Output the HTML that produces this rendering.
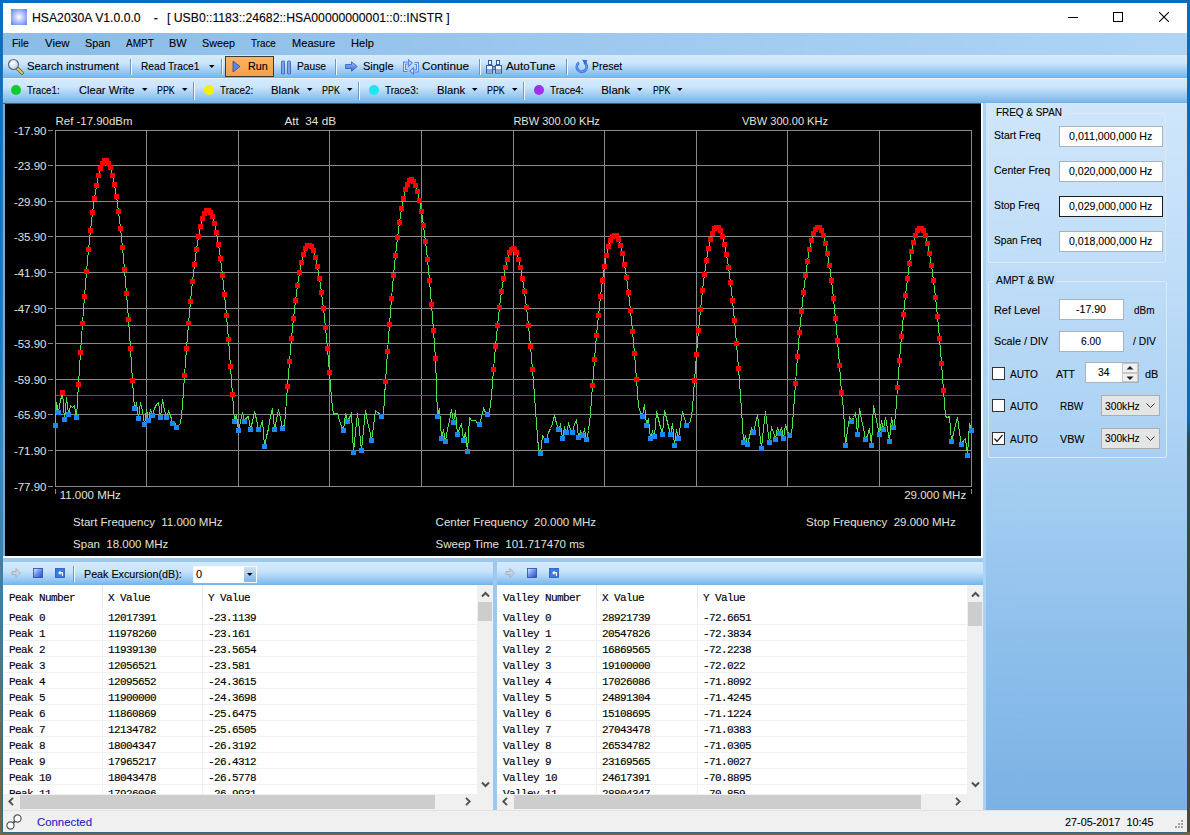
<!DOCTYPE html>
<html><head><meta charset="utf-8"><title>HSA2030A</title>
<style>
html,body{margin:0;padding:0;width:1190px;height:835px;overflow:hidden;background:#6a5a3c;}
body{position:relative;font-family:"Liberation Sans", sans-serif;}
.t{position:absolute;white-space:pre;transform-origin:0 0;-webkit-text-stroke:0.1px currentColor;}
.r{position:absolute;}
</style></head><body>
<div class="r" style="left:0px;top:0px;width:1190px;height:835px;background:#7a6438;"></div>
<div class="r" style="left:0px;top:0px;width:1190px;height:3px;background:#0a6cbc;"></div>
<div class="r" style="left:0px;top:0px;width:3px;height:832px;background:linear-gradient(#0b6dbd 0%,#1d78bc 40%,#3a86bc 55%,#4a7a90 75%,#6a6a50 88%,#7a6438 100%);"></div>
<div class="r" style="left:2px;top:33px;width:1px;height:799px;background:linear-gradient(#1a74bc 0%,#3a8ac4 50%,#3a7a9a 80%,#2a6a7a 100%);"></div>
<div class="r" style="left:1187px;top:0px;width:3px;height:832px;background:linear-gradient(#0a6cbc 0%,#0b6cb8 50%,#2a4a50 53%,#4a4a38 100%);"></div>
<div class="r" style="left:2px;top:832px;width:1186px;height:1px;background:#3a6a78;"></div>
<div class="r" style="left:3px;top:3px;width:1184px;height:829px;background:#fff;"></div>
<div class="r" style="left:11px;top:9px;width:16px;height:16px;background:radial-gradient(circle at 50% 50%,#ffffff 0%,#b8c8f8 40%,#5a80e8 100%);"></div>
<div class="t" style="left:32.20px;top:11px;font-size:12.3px;line-height:15px;color:#000;transform:scaleX(0.9934);">HSA2030A V1.0.0.0</div>
<div class="t" style="left:153.80px;top:11px;font-size:12.3px;line-height:15px;color:#000;">-</div>
<div class="t" style="left:166.80px;top:11px;font-size:12.3px;line-height:15px;color:#000;transform:scaleX(0.9926);">[ USB0::1183::24682::HSA00000000001::0::INSTR ]</div>
<div class="r" style="left:1068px;top:17px;width:10px;height:1px;background:#000;"></div>
<div class="r" style="left:1113px;top:12px;width:10px;height:10px;border:1px solid #000;box-sizing:border-box;"></div>
<svg class="r" style="left:1159px;top:12px" width="10" height="10"><path d="M0 0L10 10M10 0L0 10" stroke="#000" stroke-width="1.1"/></svg>
<div class="r" style="left:3px;top:33px;width:1184px;height:22px;background:linear-gradient(90deg,#8abce6 0%,#9cc7ee 45%,#afd4f4 100%);"></div>
<div class="t" style="left:12.40px;top:36px;font-size:11.5px;line-height:14px;color:#000;transform:scaleX(0.9066);">File</div>
<div class="t" style="left:45.40px;top:36px;font-size:11.5px;line-height:14px;color:#000;transform:scaleX(0.9911);">View</div>
<div class="t" style="left:85.00px;top:36px;font-size:11.5px;line-height:14px;color:#000;transform:scaleX(0.9420);">Span</div>
<div class="t" style="left:126.00px;top:36px;font-size:11.5px;line-height:14px;color:#000;transform:scaleX(0.8765);">AMPT</div>
<div class="t" style="left:169.00px;top:36px;font-size:11.5px;line-height:14px;color:#000;transform:scaleX(0.9501);">BW</div>
<div class="t" style="left:202.40px;top:36px;font-size:11.5px;line-height:14px;color:#000;transform:scaleX(0.9356);">Sweep</div>
<div class="t" style="left:250.80px;top:36px;font-size:11.5px;line-height:14px;color:#000;transform:scaleX(0.8561);">Trace</div>
<div class="t" style="left:292.40px;top:36px;font-size:11.5px;line-height:14px;color:#000;transform:scaleX(0.9633);">Measure</div>
<div class="t" style="left:351.30px;top:36px;font-size:11.5px;line-height:14px;color:#000;transform:scaleX(0.9640);">Help</div>
<div class="r" style="left:3px;top:55px;width:1184px;height:23px;background:linear-gradient(#d6ebfc 0%,#cce5fb 35%,#a9d2f6 60%,#7cb8ea 95%,#6aaee6 100%);"></div>
<div class="r" style="left:3px;top:78px;width:1184px;height:25px;background:linear-gradient(#d6ebfc 0%,#cce5fb 35%,#a9d2f6 60%,#7cb8ea 95%,#6aaee6 100%);"></div>
<div class="r" style="left:3px;top:78px;width:1184px;height:1px;background:#e6f3fd;"></div>
<div class="r" style="left:3px;top:103px;width:1184px;height:1px;background:#4a5a6a;"></div>
<svg class="r" style="left:7px;top:58px" width="17" height="17"><defs><radialGradient id="gl" cx="0.4" cy="0.35" r="0.7"><stop offset="0" stop-color="#ffffff"/><stop offset="1" stop-color="#b8d0e8"/></radialGradient></defs><path d="M10.5 10.5L15 15" stroke="#6a5a20" stroke-width="3.6" stroke-linecap="round"/><path d="M10.5 10.5L15 15" stroke="#e8cc60" stroke-width="2" stroke-linecap="round"/><circle cx="6.5" cy="6.5" r="5" fill="url(#gl)" stroke="#5a6a7a" stroke-width="1.2"/></svg>
<div class="t" style="left:27.40px;top:59px;font-size:11.5px;line-height:14px;color:#000;transform:scaleX(0.9837);">Search instrument</div>
<div class="r" style="left:130px;top:59px;width:2px;height:16px;background:linear-gradient(90deg,#7096bc 0,#7096bc 1px,#f4faff 1px,#f4faff 2px);"></div>
<div class="t" style="left:141.40px;top:59px;font-size:11.5px;line-height:14px;color:#000;transform:scaleX(0.8854);">Read Trace1</div>
<svg class="r" style="left:209px;top:65px" width="6" height="4"><path d="M0 0H5.5L2.75 3z" fill="#000"/></svg>
<div class="r" style="left:221px;top:59px;width:2px;height:16px;background:linear-gradient(90deg,#7096bc 0,#7096bc 1px,#f4faff 1px,#f4faff 2px);"></div>
<div class="r" style="left:225px;top:56px;width:49px;height:21px;background:linear-gradient(#fbb662,#f79f4a);border:1px solid #3e3a36;box-sizing:border-box;"></div>
<svg class="r" style="left:232px;top:60px" width="9" height="13"><path d="M1 1L8 6.5L1 12z" fill="#5a88e0" stroke="#2a4aa0" stroke-width="0.8"/></svg>
<div class="t" style="left:247.90px;top:59px;font-size:11.5px;line-height:14px;color:#000;transform:scaleX(0.9385);">Run</div>
<svg class="r" style="left:280px;top:60px" width="12" height="15"><defs><linearGradient id="pg" x1="0" y1="0" x2="1" y2="0"><stop offset="0" stop-color="#4a72d0"/><stop offset="0.5" stop-color="#9cbcf4"/><stop offset="1" stop-color="#3a62c0"/></linearGradient></defs><rect x="1.5" y="1" width="3" height="13" rx="0.8" fill="url(#pg)" stroke="#3a5ab8" stroke-width="0.7"/><rect x="7.5" y="1" width="3" height="13" rx="0.8" fill="url(#pg)" stroke="#3a5ab8" stroke-width="0.7"/></svg>
<div class="t" style="left:296.50px;top:59px;font-size:11.5px;line-height:14px;color:#000;transform:scaleX(0.8893);">Pause</div>
<div class="r" style="left:335px;top:59px;width:2px;height:16px;background:linear-gradient(90deg,#7096bc 0,#7096bc 1px,#f4faff 1px,#f4faff 2px);"></div>
<svg class="r" style="left:345px;top:61px" width="13" height="11"><defs><linearGradient id="ag" x1="0" y1="0" x2="0" y2="1"><stop offset="0" stop-color="#9cc0f8"/><stop offset="1" stop-color="#3a68d8"/></linearGradient></defs><path d="M0.5 3.5H6.5V0.8L12.2 5.5L6.5 10.2V7.5H0.5z" fill="url(#ag)" stroke="#3058c0" stroke-width="0.8"/></svg>
<div class="t" style="left:362.50px;top:59px;font-size:11.5px;line-height:14px;color:#000;transform:scaleX(0.9540);">Single</div>
<svg class="r" style="left:402px;top:59px" width="18" height="16"><g fill="none" stroke="#5a86e0" stroke-width="3" stroke-linejoin="miter"><path d="M6.5 4H2.5V11.5H5.5"/><path d="M11.5 12H15.5V4.5H12.5"/></g><g fill="none" stroke="#d8e6fa" stroke-width="1"><path d="M6.5 4H2.5V11.5H5.5"/><path d="M11.5 12H15.5V4.5H12.5"/></g><path d="M6.5 0.8L10.2 4L6.5 7.2z" fill="#d8e6fa" stroke="#5a86e0" stroke-width="1.1"/><path d="M11.5 8.8L7.8 12L11.5 15.2z" fill="#d8e6fa" stroke="#5a86e0" stroke-width="1.1"/></svg>
<div class="t" style="left:422.40px;top:59px;font-size:11.5px;line-height:14px;color:#000;transform:scaleX(1.0210);">Continue</div>
<div class="r" style="left:479px;top:59px;width:2px;height:16px;background:linear-gradient(90deg,#7096bc 0,#7096bc 1px,#f4faff 1px,#f4faff 2px);"></div>
<svg class="r" style="left:486px;top:59px" width="17" height="15"><g stroke="#3a5a98" stroke-width="1" fill="#eef4fc"><rect x="2.5" y="1.5" width="3" height="4"/><rect x="10.5" y="1.5" width="3" height="4"/><rect x="0.5" y="6.5" width="6" height="7.5"/><rect x="9.5" y="6.5" width="6" height="7.5"/><rect x="6.5" y="7.5" width="3" height="3" fill="#8aa8d8"/></g><g fill="#8aa8d8"><rect x="1" y="10" width="5" height="3.5"/><rect x="10" y="10" width="5" height="3.5"/></g></svg>
<div class="t" style="left:505.90px;top:59px;font-size:11.5px;line-height:14px;color:#000;">AutoTune</div>
<div class="r" style="left:566px;top:59px;width:2px;height:16px;background:linear-gradient(90deg,#7096bc 0,#7096bc 1px,#f4faff 1px,#f4faff 2px);"></div>
<svg class="r" style="left:574px;top:59px" width="15" height="15"><path d="M5 3.6A5 5 0 1 0 10.2 3.4" fill="none" stroke="#3a6ad0" stroke-width="2.6"/><path d="M5 3.6A5 5 0 1 0 10.2 3.4" fill="none" stroke="#6a9af0" stroke-width="1.2"/><path d="M8.2 0.8L13.5 1.2L11 6.2z" fill="#3a6ad0"/></svg>
<div class="t" style="left:592.20px;top:59px;font-size:11.5px;line-height:14px;color:#000;transform:scaleX(0.9086);">Preset</div>
<div class="r" style="left:11px;top:85px;width:10px;height:10px;border-radius:50%;background:#13c933;"></div>
<div class="t" style="left:27.40px;top:83px;font-size:11.5px;line-height:14px;color:#000;transform:scaleX(0.8454);">Trace1:</div>
<div class="t" style="left:78.60px;top:83px;font-size:11.5px;line-height:14px;color:#000;transform:scaleX(0.9668);">Clear Write</div>
<svg class="r" style="left:142px;top:88px" width="6" height="4"><path d="M0 0H5.5L2.75 3z" fill="#000"/></svg>
<div class="t" style="left:157.00px;top:83px;font-size:11.5px;line-height:14px;color:#000;transform:scaleX(0.7691);">PPK</div>
<svg class="r" style="left:182px;top:88px" width="6" height="4"><path d="M0 0H5.5L2.75 3z" fill="#000"/></svg>
<div class="r" style="left:193px;top:82px;width:2px;height:18px;background:linear-gradient(90deg,#7096bc 0,#7096bc 1px,#f4faff 1px,#f4faff 2px);"></div>
<div class="r" style="left:204px;top:85px;width:10px;height:10px;border-radius:50%;background:#f2f200;"></div>
<div class="t" style="left:220.20px;top:83px;font-size:11.5px;line-height:14px;color:#000;transform:scaleX(0.8610);">Trace2:</div>
<div class="t" style="left:271.40px;top:83px;font-size:11.5px;line-height:14px;color:#000;transform:scaleX(0.9837);">Blank</div>
<svg class="r" style="left:307px;top:88px" width="6" height="4"><path d="M0 0H5.5L2.75 3z" fill="#000"/></svg>
<div class="t" style="left:322.40px;top:83px;font-size:11.5px;line-height:14px;color:#000;transform:scaleX(0.7778);">PPK</div>
<svg class="r" style="left:347px;top:88px" width="6" height="4"><path d="M0 0H5.5L2.75 3z" fill="#000"/></svg>
<div class="r" style="left:358px;top:82px;width:2px;height:18px;background:linear-gradient(90deg,#7096bc 0,#7096bc 1px,#f4faff 1px,#f4faff 2px);"></div>
<div class="r" style="left:369px;top:85px;width:10px;height:10px;border-radius:50%;background:#1de6f0;"></div>
<div class="t" style="left:385.30px;top:83px;font-size:11.5px;line-height:14px;color:#000;transform:scaleX(0.8688);">Trace3:</div>
<div class="t" style="left:436.50px;top:83px;font-size:11.5px;line-height:14px;color:#000;transform:scaleX(0.9803);">Blank</div>
<svg class="r" style="left:472px;top:88px" width="6" height="4"><path d="M0 0H5.5L2.75 3z" fill="#000"/></svg>
<div class="t" style="left:487.00px;top:83px;font-size:11.5px;line-height:14px;color:#000;transform:scaleX(0.7691);">PPK</div>
<svg class="r" style="left:512px;top:88px" width="6" height="4"><path d="M0 0H5.5L2.75 3z" fill="#000"/></svg>
<div class="r" style="left:523px;top:82px;width:2px;height:18px;background:linear-gradient(90deg,#7096bc 0,#7096bc 1px,#f4faff 1px,#f4faff 2px);"></div>
<div class="r" style="left:534px;top:85px;width:10px;height:10px;border-radius:50%;background:#a030e8;"></div>
<div class="t" style="left:549.90px;top:83px;font-size:11.5px;line-height:14px;color:#000;transform:scaleX(0.8713);">Trace4:</div>
<div class="t" style="left:601.20px;top:83px;font-size:11.5px;line-height:14px;color:#000;">Blank</div>
<svg class="r" style="left:637px;top:88px" width="6" height="4"><path d="M0 0H5.5L2.75 3z" fill="#000"/></svg>
<div class="t" style="left:652.50px;top:83px;font-size:11.5px;line-height:14px;color:#000;transform:scaleX(0.7561);">PPK</div>
<svg class="r" style="left:677px;top:88px" width="6" height="4"><path d="M0 0H5.5L2.75 3z" fill="#000"/></svg>
<div class="r" style="left:3px;top:104px;width:2px;height:452px;background:#7fa8c8;"></div>
<div class="r" style="left:5px;top:104px;width:976px;height:452px;background:#000;"></div>
<svg class="r" style="left:5px;top:104px" width="976" height="452" shape-rendering="crispEdges">
<g transform="translate(-5,-104)">
<path d="M55 130.5H972 M48 130.5H53 M55 165.5H972 M48 165.5H53 M55 201.5H972 M48 201.5H53 M55 236.5H972 M48 236.5H53 M55 272.5H972 M48 272.5H53 M55 308.5H972 M48 308.5H53 M55 343.5H972 M48 343.5H53 M55 379.5H972 M48 379.5H53 M55 414.5H972 M48 414.5H53 M55 450.5H972 M48 450.5H53 M55 486.5H972 M48 486.5H53 M55.5 130V487 M146.5 130V487 M238.5 130V487 M329.5 130V487 M421.5 130V487 M513.5 130V487 M604.5 130V487 M696.5 130V487 M787.5 130V487 M879.5 130V487 M971.5 130V487 M55.5 489V494M971.5 489V494" stroke="#8a8a8a" stroke-width="1" fill="none"/>
<path d="M56 325.5H971" stroke="#4a78b8" stroke-width="1"/>
<path d="M56 395.5H971" stroke="#a83030" stroke-width="1"/>
</g></svg>
<svg class="r" style="left:5px;top:104px" width="976" height="452">
<g transform="translate(-5,-104)">
<polyline points="55.5,425.5 56.5,402.5 58.5,412.5 60.5,400.5 62.5,392.5 64.5,419.5 66.5,397.5 68.5,414.5 70.5,405.5 72.5,407.5 74.5,405.5 76.5,417.5 78.5,384.5 80.5,352.5 82.5,323.5 84.5,296.5 86.5,271.5 88.5,249.5 90.5,230.5 92.5,212.5 94.5,198.5 96.5,185.5 98.5,175.5 100.5,168.5 102.5,163.5 104.5,160.5 106.5,160.5 108.5,163.5 110.5,167.5 112.5,175.5 114.5,184.5 116.5,196.5 118.5,211.5 120.5,228.5 122.5,247.5 124.5,269.5 126.5,293.5 128.5,319.5 130.5,348.5 132.5,380.5 134.5,408.5 136.5,403.5 138.5,418.5 140.5,402.5 142.5,410.5 144.5,424.5 146.5,409.5 148.5,420.5 150.5,409.5 152.5,415.5 154.5,408.5 156.5,404.5 158.5,402.5 160.5,417.5 162.5,399.5 164.5,410.5 166.5,417.5 168.5,411.5 170.5,415.5 172.5,423.5 174.5,421.5 176.5,427.5 178.5,425.5 180.5,423.5 182.5,405.5 184.5,375.5 186.5,348.5 188.5,323.5 190.5,301.5 192.5,281.5 194.5,264.5 196.5,249.5 198.5,236.5 200.5,226.5 202.5,218.5 204.5,213.5 206.5,210.5 208.5,210.5 210.5,212.5 212.5,216.5 214.5,223.5 216.5,232.5 218.5,244.5 220.5,258.5 222.5,275.5 224.5,294.5 226.5,315.5 228.5,339.5 230.5,366.5 232.5,394.5 234.5,421.5 236.5,414.5 238.5,430.5 240.5,421.5 242.5,412.5 244.5,421.5 246.5,417.5 248.5,416.5 250.5,429.5 252.5,421.5 254.5,411.5 256.5,419.5 258.5,429.5 260.5,426.5 262.5,420.5 264.5,446.5 266.5,436.5 268.5,428.5 270.5,416.5 272.5,408.5 274.5,429.5 276.5,419.5 278.5,409.5 280.5,418.5 282.5,428.5 284.5,424.5 285.5,413.5 287.5,386.5 289.5,361.5 291.5,338.5 293.5,318.5 295.5,300.5 297.5,285.5 299.5,272.5 301.5,262.5 303.5,254.5 305.5,248.5 307.5,245.5 309.5,245.5 311.5,246.5 313.5,250.5 315.5,257.5 317.5,266.5 319.5,278.5 321.5,292.5 323.5,308.5 325.5,327.5 327.5,348.5 329.5,372.5 331.5,398.5 333.5,414.5 335.5,413.5 337.5,413.5 339.5,420.5 341.5,426.5 343.5,430.5 345.5,413.5 347.5,421.5 349.5,417.5 351.5,413.5 353.5,452.5 355.5,431.5 357.5,413.5 359.5,430.5 361.5,450.5 363.5,429.5 365.5,410.5 367.5,421.5 369.5,429.5 371.5,440.5 373.5,426.5 375.5,410.5 377.5,412.5 379.5,413.5 381.5,416.5 383.5,414.5 385.5,381.5 387.5,351.5 389.5,324.5 391.5,298.5 393.5,275.5 395.5,255.5 397.5,237.5 399.5,222.5 401.5,208.5 403.5,198.5 405.5,189.5 407.5,184.5 409.5,180.5 411.5,179.5 413.5,181.5 415.5,185.5 417.5,191.5 419.5,200.5 421.5,211.5 423.5,225.5 425.5,241.5 427.5,259.5 429.5,280.5 431.5,304.5 433.5,330.5 435.5,358.5 437.5,416.5 439.5,408.5 441.5,438.5 443.5,429.5 445.5,441.5 447.5,429.5 449.5,420.5 451.5,409.5 453.5,422.5 455.5,410.5 457.5,434.5 459.5,428.5 461.5,423.5 463.5,440.5 465.5,432.5 467.5,451.5 469.5,417.5 471.5,420.5 473.5,420.5 475.5,420.5 477.5,423.5 479.5,424.5 481.5,417.5 483.5,408.5 485.5,412.5 487.5,414.5 489.5,412.5 491.5,395.5 493.5,369.5 495.5,346.5 497.5,325.5 499.5,307.5 501.5,291.5 503.5,278.5 505.5,267.5 507.5,259.5 509.5,252.5 511.5,249.5 513.5,248.5 514.5,249.5 516.5,252.5 518.5,259.5 520.5,267.5 522.5,278.5 524.5,291.5 526.5,307.5 528.5,325.5 530.5,346.5 532.5,369.5 534.5,395.5 536.5,423.5 538.5,448.5 540.5,453.5 542.5,435.5 544.5,438.5 546.5,440.5 548.5,432.5 550.5,428.5 552.5,423.5 554.5,415.5 556.5,423.5 558.5,429.5 560.5,424.5 562.5,438.5 564.5,427.5 566.5,432.5 568.5,423.5 570.5,429.5 572.5,432.5 574.5,424.5 576.5,419.5 578.5,437.5 580.5,431.5 582.5,435.5 584.5,429.5 586.5,439.5 588.5,430.5 590.5,413.5 592.5,385.5 594.5,359.5 596.5,335.5 598.5,315.5 600.5,296.5 602.5,280.5 604.5,266.5 606.5,255.5 608.5,246.5 610.5,240.5 612.5,236.5 614.5,235.5 616.5,235.5 618.5,239.5 620.5,245.5 622.5,253.5 624.5,264.5 626.5,277.5 628.5,292.5 630.5,310.5 632.5,331.5 634.5,353.5 636.5,379.5 638.5,406.5 640.5,412.5 642.5,416.5 644.5,404.5 646.5,425.5 648.5,418.5 650.5,438.5 652.5,431.5 654.5,436.5 656.5,411.5 658.5,419.5 660.5,427.5 662.5,434.5 664.5,410.5 666.5,418.5 668.5,426.5 670.5,434.5 672.5,423.5 674.5,445.5 676.5,429.5 678.5,438.5 680.5,424.5 682.5,411.5 684.5,418.5 686.5,425.5 688.5,423.5 690.5,421.5 692.5,408.5 694.5,380.5 696.5,354.5 698.5,330.5 700.5,309.5 702.5,290.5 704.5,274.5 706.5,260.5 708.5,248.5 710.5,239.5 712.5,233.5 714.5,228.5 716.5,227.5 718.5,227.5 720.5,230.5 722.5,236.5 724.5,244.5 726.5,254.5 728.5,267.5 730.5,282.5 732.5,300.5 734.5,320.5 736.5,343.5 738.5,368.5 740.5,395.5 742.5,425.5 743.5,442.5 745.5,435.5 747.5,444.5 749.5,436.5 751.5,428.5 753.5,432.5 755.5,423.5 757.5,414.5 759.5,431.5 761.5,448.5 763.5,428.5 765.5,411.5 767.5,428.5 769.5,442.5 771.5,427.5 773.5,432.5 775.5,439.5 777.5,427.5 779.5,433.5 781.5,427.5 783.5,438.5 785.5,424.5 787.5,431.5 789.5,435.5 791.5,434.5 793.5,411.5 795.5,383.5 797.5,356.5 799.5,332.5 801.5,311.5 803.5,292.5 805.5,275.5 807.5,261.5 809.5,249.5 811.5,240.5 813.5,233.5 815.5,229.5 817.5,227.5 819.5,227.5 821.5,230.5 823.5,235.5 825.5,243.5 827.5,253.5 829.5,265.5 831.5,280.5 833.5,298.5 835.5,318.5 837.5,340.5 839.5,365.5 841.5,392.5 843.5,409.5 845.5,445.5 847.5,430.5 849.5,417.5 851.5,421.5 853.5,417.5 855.5,412.5 857.5,434.5 859.5,408.5 861.5,419.5 863.5,428.5 865.5,439.5 867.5,435.5 869.5,428.5 871.5,445.5 873.5,405.5 875.5,415.5 877.5,425.5 879.5,434.5 881.5,420.5 883.5,429.5 885.5,417.5 887.5,428.5 889.5,441.5 891.5,417.5 893.5,427.5 895.5,416.5 897.5,387.5 899.5,360.5 901.5,336.5 903.5,314.5 905.5,295.5 907.5,278.5 909.5,263.5 911.5,251.5 913.5,242.5 915.5,235.5 917.5,230.5 919.5,228.5 921.5,228.5 923.5,230.5 925.5,235.5 927.5,243.5 929.5,253.5 931.5,265.5 933.5,280.5 935.5,297.5 937.5,316.5 939.5,338.5 941.5,363.5 943.5,390.5 945.5,416.5 947.5,417.5 949.5,416.5 951.5,441.5 953.5,433.5 955.5,424.5 957.5,417.5 959.5,432.5 961.5,444.5 963.5,440.5 965.5,438.5 967.5,455.5 969.5,423.5 971.5,430.5" fill="none" stroke="#4ee04e" stroke-width="1" shape-rendering="crispEdges"/>
</g></svg>
<svg class="r" style="left:5px;top:104px" width="976" height="452" shape-rendering="crispEdges">
<g transform="translate(-5,-104)">
<path d="M60 390h5v5h-5zM76 382h5v5h-5zM78 350h5v5h-5zM80 321h5v5h-5zM82 294h5v5h-5zM84 269h5v5h-5zM86 247h5v5h-5zM88 228h5v5h-5zM90 210h5v5h-5zM92 196h5v5h-5zM94 183h5v5h-5zM96 173h5v5h-5zM98 166h5v5h-5zM100 161h5v5h-5zM102 158h5v5h-5zM104 158h5v5h-5zM106 161h5v5h-5zM108 165h5v5h-5zM110 173h5v5h-5zM112 182h5v5h-5zM114 194h5v5h-5zM116 209h5v5h-5zM118 226h5v5h-5zM120 245h5v5h-5zM122 267h5v5h-5zM124 291h5v5h-5zM126 317h5v5h-5zM128 346h5v5h-5zM130 378h5v5h-5zM182 373h5v5h-5zM184 346h5v5h-5zM186 321h5v5h-5zM188 299h5v5h-5zM190 279h5v5h-5zM192 262h5v5h-5zM194 247h5v5h-5zM196 234h5v5h-5zM198 224h5v5h-5zM200 216h5v5h-5zM202 211h5v5h-5zM204 208h5v5h-5zM206 208h5v5h-5zM208 210h5v5h-5zM210 214h5v5h-5zM212 221h5v5h-5zM214 230h5v5h-5zM216 242h5v5h-5zM218 256h5v5h-5zM220 273h5v5h-5zM222 292h5v5h-5zM224 313h5v5h-5zM226 337h5v5h-5zM228 364h5v5h-5zM230 392h5v5h-5zM285 384h5v5h-5zM287 359h5v5h-5zM289 336h5v5h-5zM291 316h5v5h-5zM293 298h5v5h-5zM295 283h5v5h-5zM297 270h5v5h-5zM299 260h5v5h-5zM301 252h5v5h-5zM303 246h5v5h-5zM305 243h5v5h-5zM307 243h5v5h-5zM309 244h5v5h-5zM311 248h5v5h-5zM313 255h5v5h-5zM315 264h5v5h-5zM317 276h5v5h-5zM319 290h5v5h-5zM321 306h5v5h-5zM323 325h5v5h-5zM325 346h5v5h-5zM327 370h5v5h-5zM383 379h5v5h-5zM385 349h5v5h-5zM387 322h5v5h-5zM389 296h5v5h-5zM391 273h5v5h-5zM393 253h5v5h-5zM395 235h5v5h-5zM397 220h5v5h-5zM399 206h5v5h-5zM401 196h5v5h-5zM403 187h5v5h-5zM405 182h5v5h-5zM407 178h5v5h-5zM409 177h5v5h-5zM411 179h5v5h-5zM413 183h5v5h-5zM415 189h5v5h-5zM417 198h5v5h-5zM419 209h5v5h-5zM421 223h5v5h-5zM423 239h5v5h-5zM425 257h5v5h-5zM427 278h5v5h-5zM429 302h5v5h-5zM431 328h5v5h-5zM433 356h5v5h-5zM491 367h5v5h-5zM493 344h5v5h-5zM495 323h5v5h-5zM497 305h5v5h-5zM499 289h5v5h-5zM501 276h5v5h-5zM503 265h5v5h-5zM505 257h5v5h-5zM507 250h5v5h-5zM509 247h5v5h-5zM511 246h5v5h-5zM512 247h5v5h-5zM514 250h5v5h-5zM516 257h5v5h-5zM518 265h5v5h-5zM520 276h5v5h-5zM522 289h5v5h-5zM524 305h5v5h-5zM526 323h5v5h-5zM528 344h5v5h-5zM530 367h5v5h-5zM590 383h5v5h-5zM592 357h5v5h-5zM594 333h5v5h-5zM596 313h5v5h-5zM598 294h5v5h-5zM600 278h5v5h-5zM602 264h5v5h-5zM604 253h5v5h-5zM606 244h5v5h-5zM608 238h5v5h-5zM610 234h5v5h-5zM612 233h5v5h-5zM614 233h5v5h-5zM616 237h5v5h-5zM618 243h5v5h-5zM620 251h5v5h-5zM622 262h5v5h-5zM624 275h5v5h-5zM626 290h5v5h-5zM628 308h5v5h-5zM630 329h5v5h-5zM632 351h5v5h-5zM634 377h5v5h-5zM692 378h5v5h-5zM694 352h5v5h-5zM696 328h5v5h-5zM698 307h5v5h-5zM700 288h5v5h-5zM702 272h5v5h-5zM704 258h5v5h-5zM706 246h5v5h-5zM708 237h5v5h-5zM710 231h5v5h-5zM712 226h5v5h-5zM714 225h5v5h-5zM716 225h5v5h-5zM718 228h5v5h-5zM720 234h5v5h-5zM722 242h5v5h-5zM724 252h5v5h-5zM726 265h5v5h-5zM728 280h5v5h-5zM730 298h5v5h-5zM732 318h5v5h-5zM734 341h5v5h-5zM736 366h5v5h-5zM793 381h5v5h-5zM795 354h5v5h-5zM797 330h5v5h-5zM799 309h5v5h-5zM801 290h5v5h-5zM803 273h5v5h-5zM805 259h5v5h-5zM807 247h5v5h-5zM809 238h5v5h-5zM811 231h5v5h-5zM813 227h5v5h-5zM815 225h5v5h-5zM817 225h5v5h-5zM819 228h5v5h-5zM821 233h5v5h-5zM823 241h5v5h-5zM825 251h5v5h-5zM827 263h5v5h-5zM829 278h5v5h-5zM831 296h5v5h-5zM833 316h5v5h-5zM835 338h5v5h-5zM837 363h5v5h-5zM839 390h5v5h-5zM895 385h5v5h-5zM897 358h5v5h-5zM899 334h5v5h-5zM901 312h5v5h-5zM903 293h5v5h-5zM905 276h5v5h-5zM907 261h5v5h-5zM909 249h5v5h-5zM911 240h5v5h-5zM913 233h5v5h-5zM915 228h5v5h-5zM917 226h5v5h-5zM919 226h5v5h-5zM921 228h5v5h-5zM923 233h5v5h-5zM925 241h5v5h-5zM927 251h5v5h-5zM929 263h5v5h-5zM931 278h5v5h-5zM933 295h5v5h-5zM935 314h5v5h-5zM937 336h5v5h-5zM939 361h5v5h-5zM941 388h5v5h-5z" fill="#ff0000"/>
<path d="M53 423h5v5h-5zM56 410h5v5h-5zM62 417h5v5h-5zM66 412h5v5h-5zM74 415h5v5h-5zM132 406h5v5h-5zM136 416h5v5h-5zM142 422h5v5h-5zM146 418h5v5h-5zM150 413h5v5h-5zM158 415h5v5h-5zM164 415h5v5h-5zM170 421h5v5h-5zM174 425h5v5h-5zM232 419h5v5h-5zM236 428h5v5h-5zM242 419h5v5h-5zM248 427h5v5h-5zM256 427h5v5h-5zM262 444h5v5h-5zM272 427h5v5h-5zM280 426h5v5h-5zM341 428h5v5h-5zM345 419h5v5h-5zM351 450h5v5h-5zM359 448h5v5h-5zM369 438h5v5h-5zM379 414h5v5h-5zM435 414h5v5h-5zM439 436h5v5h-5zM443 439h5v5h-5zM451 420h5v5h-5zM455 432h5v5h-5zM461 438h5v5h-5zM465 449h5v5h-5zM477 422h5v5h-5zM485 412h5v5h-5zM538 451h5v5h-5zM544 438h5v5h-5zM556 427h5v5h-5zM560 436h5v5h-5zM564 430h5v5h-5zM570 430h5v5h-5zM576 435h5v5h-5zM580 433h5v5h-5zM584 437h5v5h-5zM640 414h5v5h-5zM644 423h5v5h-5zM648 436h5v5h-5zM652 434h5v5h-5zM660 432h5v5h-5zM668 432h5v5h-5zM672 443h5v5h-5zM676 436h5v5h-5zM684 423h5v5h-5zM741 440h5v5h-5zM745 442h5v5h-5zM751 430h5v5h-5zM759 446h5v5h-5zM767 440h5v5h-5zM773 437h5v5h-5zM777 431h5v5h-5zM781 436h5v5h-5zM787 433h5v5h-5zM843 443h5v5h-5zM849 419h5v5h-5zM855 432h5v5h-5zM863 437h5v5h-5zM869 443h5v5h-5zM877 432h5v5h-5zM881 427h5v5h-5zM887 439h5v5h-5zM891 425h5v5h-5zM949 439h5v5h-5zM959 442h5v5h-5zM965 453h5v5h-5zM969 428h5v5h-5z" fill="#1e88f0"/>
</g></svg>
<svg class="r" style="left:5px;top:104px" width="976" height="452">
<g transform="translate(-5,-104)" fill="#e2e2dc" font-family="Liberation Sans, sans-serif" xml:space="preserve">
<text x="46.5" y="134.5" text-anchor="end" font-size="11.5">-17.90</text><text x="46.5" y="169.5" text-anchor="end" font-size="11.5">-23.90</text><text x="46.5" y="205.5" text-anchor="end" font-size="11.5">-29.90</text><text x="46.5" y="240.5" text-anchor="end" font-size="11.5">-35.90</text><text x="46.5" y="276.5" text-anchor="end" font-size="11.5">-41.90</text><text x="46.5" y="312.5" text-anchor="end" font-size="11.5">-47.90</text><text x="46.5" y="347.5" text-anchor="end" font-size="11.5">-53.90</text><text x="46.5" y="383.5" text-anchor="end" font-size="11.5">-59.90</text><text x="46.5" y="418.5" text-anchor="end" font-size="11.5">-65.90</text><text x="46.5" y="454.5" text-anchor="end" font-size="11.5">-71.90</text><text x="46.5" y="490.5" text-anchor="end" font-size="11.5">-77.90</text><text x="55.5" y="124.7" text-anchor="start" font-size="11.5" textLength="77" lengthAdjust="spacingAndGlyphs">Ref -17.90dBm</text><text x="284.5" y="124.7" text-anchor="start" font-size="11.5" textLength="51.5" lengthAdjust="spacingAndGlyphs">Att &#160;34 dB</text><text x="513.4" y="124.7" text-anchor="start" font-size="11.5" textLength="86.5" lengthAdjust="spacingAndGlyphs">RBW 300.00 KHz</text><text x="742" y="124.7" text-anchor="start" font-size="11.5" textLength="86" lengthAdjust="spacingAndGlyphs">VBW 300.00 KHz</text><text x="59.7" y="498.5" text-anchor="start" font-size="11.5">11.000 MHz</text><text x="966.2" y="498.5" text-anchor="end" font-size="11.5">29.000 MHz</text><text x="73.1" y="526" text-anchor="start" font-size="11.5">Start Frequency &#160;11.000 MHz</text><text x="73.1" y="547.6" text-anchor="start" font-size="11.5">Span &#160;18.000 MHz</text><text x="435.6" y="526" text-anchor="start" font-size="11.5">Center Frequency &#160;20.000 MHz</text><text x="435.6" y="547.6" text-anchor="start" font-size="11.5">Sweep Time &#160;101.717470 ms</text><text x="806.1" y="526" text-anchor="start" font-size="11.5">Stop Frequency &#160;29.000 MHz</text>
</g></svg>
<div class="r" style="left:981px;top:103px;width:2px;height:453px;background:#f4f8fc;"></div>
<div class="r" style="left:983px;top:103px;width:4px;height:707px;background:#aad2f4;"></div>
<div class="r" style="left:986px;top:103px;width:201px;height:707px;background:linear-gradient(#cfe6fb 0%,#c2dff8 20%,#a9d0f3 50%,#8fc0ec 75%,#7bb2e4 100%);"></div>
<div class="r" style="left:988px;top:113px;width:178px;height:150px;border:1px solid #dce9f4;border-radius:2px;box-sizing:border-box;"></div>
<div class="r" style="left:994px;top:104px;width:72px;height:14px;background:#cfe6fb;"></div>
<div class="t" style="left:996.40px;top:106px;font-size:11px;line-height:13px;color:#000;transform:scaleX(0.9023);">FREQ &amp; SPAN</div>
<div class="t" style="left:993.70px;top:129px;font-size:11px;line-height:13px;color:#000;transform:scaleX(0.9549);">Start Freq</div>
<div class="r" style="left:1059px;top:126px;width:104px;height:21px;background:#fff;border:1px solid #a9b3bd;box-sizing:border-box;"></div>
<div class="t" style="left:1069.30px;top:130px;font-size:11px;line-height:13px;color:#000;transform:scaleX(0.9694);">0,011,000,000 Hz</div>
<div class="t" style="left:993.70px;top:164px;font-size:11px;line-height:13px;color:#000;transform:scaleX(0.9541);">Center Freq</div>
<div class="r" style="left:1059px;top:161px;width:104px;height:21px;background:#fff;border:1px solid #a9b3bd;box-sizing:border-box;"></div>
<div class="t" style="left:1069.30px;top:165px;font-size:11px;line-height:13px;color:#000;transform:scaleX(0.9603);">0,020,000,000 Hz</div>
<div class="t" style="left:993.70px;top:199px;font-size:11px;line-height:13px;color:#000;transform:scaleX(0.9420);">Stop Freq</div>
<div class="r" style="left:1059px;top:196px;width:104px;height:21px;background:#fff;border:1px solid #1e1e1e;box-sizing:border-box;"></div>
<div class="t" style="left:1069.30px;top:200px;font-size:11px;line-height:13px;color:#000;transform:scaleX(0.9603);">0,029,000,000 Hz</div>
<div class="t" style="left:993.70px;top:234px;font-size:11px;line-height:13px;color:#000;transform:scaleX(0.9247);">Span Freq</div>
<div class="r" style="left:1059px;top:231px;width:104px;height:21px;background:#fff;border:1px solid #a9b3bd;box-sizing:border-box;"></div>
<div class="t" style="left:1069.30px;top:235px;font-size:11px;line-height:13px;color:#000;transform:scaleX(0.9603);">0,018,000,000 Hz</div>
<div class="r" style="left:988px;top:281px;width:179px;height:177px;border:1px solid #dce9f4;border-radius:2px;box-sizing:border-box;"></div>
<div class="r" style="left:994px;top:272px;width:62px;height:14px;background:#b9dbf6;"></div>
<div class="t" style="left:996.40px;top:274px;font-size:11px;line-height:13px;color:#000;transform:scaleX(0.9427);">AMPT &amp; BW</div>
<div class="t" style="left:993.50px;top:304px;font-size:11px;line-height:13px;color:#000;transform:scaleX(0.9899);">Ref Level</div>
<div class="r" style="left:1059px;top:299px;width:65px;height:21px;background:#fff;border:1px solid #a9b3bd;box-sizing:border-box;"></div>
<div class="t" style="left:1076.00px;top:303px;font-size:11px;line-height:13px;color:#000;transform:scaleX(0.9618);">-17.90</div>
<div class="t" style="left:1134.00px;top:304px;font-size:11px;line-height:13px;color:#000;transform:scaleX(0.9063);">dBm</div>
<div class="t" style="left:993.50px;top:335px;font-size:11px;line-height:13px;color:#000;transform:scaleX(0.9814);">Scale / DIV</div>
<div class="r" style="left:1059px;top:331px;width:65px;height:21px;background:#fff;border:1px solid #a9b3bd;box-sizing:border-box;"></div>
<div class="t" style="left:1081.00px;top:335px;font-size:11px;line-height:13px;color:#000;transform:scaleX(0.9342);">6.00</div>
<div class="t" style="left:1133.00px;top:335px;font-size:11px;line-height:13px;color:#000;transform:scaleX(0.9407);">/ DIV</div>
<div class="r" style="left:992px;top:367px;width:13px;height:13px;background:#fff;border:1px solid #333;box-sizing:border-box;"></div>
<div class="t" style="left:1010.40px;top:368px;font-size:11px;line-height:13px;color:#000;transform:scaleX(0.9157);">AUTO</div>
<div class="r" style="left:992px;top:399px;width:13px;height:13px;background:#fff;border:1px solid #333;box-sizing:border-box;"></div>
<div class="t" style="left:1010.40px;top:400px;font-size:11px;line-height:13px;color:#000;transform:scaleX(0.9157);">AUTO</div>
<div class="r" style="left:992px;top:432px;width:13px;height:13px;background:#fff;border:1px solid #333;box-sizing:border-box;"></div>
<svg class="r" style="left:992px;top:432px" width="13" height="13"><path d="M2.5 6.5L5 9.5L10.5 3" fill="none" stroke="#222" stroke-width="1.2"/></svg>
<div class="t" style="left:1010.40px;top:433px;font-size:11px;line-height:13px;color:#000;transform:scaleX(0.9157);">AUTO</div>
<div class="t" style="left:1056.10px;top:368px;font-size:11px;line-height:13px;color:#000;transform:scaleX(0.9519);">ATT</div>
<div class="r" style="left:1085px;top:362px;width:54px;height:21px;background:#fff;border:1px solid #a9b3bd;box-sizing:border-box;"></div>
<div class="r" style="left:1122px;top:363px;width:16px;height:10px;background:#f0f0f0;border:1px solid #c8c8c8;box-sizing:border-box;"></div>
<div class="r" style="left:1122px;top:373px;width:16px;height:9px;background:#f0f0f0;border:1px solid #c8c8c8;box-sizing:border-box;"></div>
<svg class="r" style="left:1126px;top:365px" width="8" height="16"><path d="M0.5 4.5H7.5L4 1z M0.5 11.5H7.5L4 15z" fill="#222"/></svg>
<div class="t" style="left:1098.40px;top:366px;font-size:11px;line-height:13px;color:#000;transform:scaleX(0.9317);">34</div>
<div class="t" style="left:1145.30px;top:368px;font-size:11px;line-height:13px;color:#000;transform:scaleX(0.9885);">dB</div>
<div class="t" style="left:1060.30px;top:400px;font-size:11px;line-height:13px;color:#000;transform:scaleX(0.9079);">RBW</div>
<div class="t" style="left:1060.30px;top:433px;font-size:11px;line-height:13px;color:#000;transform:scaleX(0.9778);">VBW</div>
<div class="r" style="left:1101px;top:395px;width:59px;height:21px;background:#e5e5e5;border:1px solid #adadad;box-sizing:border-box;"></div>
<div class="t" style="left:1105.30px;top:400px;font-size:11px;line-height:13px;color:#000;transform:scaleX(0.9304);">300kHz</div>
<svg class="r" style="left:1146px;top:403px" width="9" height="6"><path d="M0.5 0.5L4.5 4.5L8.5 0.5" fill="none" stroke="#333" stroke-width="1"/></svg>
<div class="r" style="left:1101px;top:428px;width:59px;height:21px;background:#e5e5e5;border:1px solid #adadad;box-sizing:border-box;"></div>
<div class="t" style="left:1105.30px;top:432px;font-size:11px;line-height:13px;color:#000;transform:scaleX(0.9304);">300kHz</div>
<svg class="r" style="left:1146px;top:436px" width="9" height="6"><path d="M0.5 0.5L4.5 4.5L8.5 0.5" fill="none" stroke="#333" stroke-width="1"/></svg>
<div class="r" style="left:5px;top:556px;width:978px;height:2px;background:#fbfdff;"></div>
<div class="r" style="left:3px;top:558px;width:980px;height:4px;background:#9ec8ec;"></div>
<div class="r" style="left:493px;top:558px;width:4px;height:252px;background:#9ec8ec;"></div>
<div class="r" style="left:3px;top:562px;width:490px;height:23px;background:linear-gradient(#d4eafc 0%,#c8e4fb 40%,#a2cef5 70%,#74b4ea 100%);"></div>
<div class="r" style="left:497px;top:562px;width:486px;height:23px;background:linear-gradient(#d4eafc 0%,#c8e4fb 40%,#a2cef5 70%,#74b4ea 100%);"></div>
<svg width="0" height="0" style="position:absolute"><defs><linearGradient id="sq" x1="0" y1="0" x2="1" y2="1"><stop offset="0" stop-color="#dfe8ff"/><stop offset="0.5" stop-color="#6a8ee8"/><stop offset="1" stop-color="#2a4ab8"/></linearGradient></defs></svg>
<svg class="r" style="left:11px;top:567px" width="60" height="14"><path d="M1 4.5H5V1.5L9.5 6L5 10.5V7.5H1z" fill="#c8d4e0" stroke="#9aaabb" stroke-width="0.8"/><rect x="22.5" y="1.5" width="9" height="9" fill="url(#sq)" stroke="#2a48a8" stroke-width="0.8"/><rect x="44.5" y="1.5" width="9" height="9" fill="#3a7ae0" stroke="#2a58b8" stroke-width="0.8"/><path d="M47 6L49.5 3.5V5H52V9H51V6.5H49.5V8z" fill="#fff"/></svg>
<div class="r" style="left:73px;top:566px;width:2px;height:16px;background:linear-gradient(90deg,#7096bc 0,#7096bc 1px,#f4faff 1px,#f4faff 2px);"></div>
<div class="t" style="left:83.70px;top:568px;font-size:11px;line-height:13px;color:#000;transform:scaleX(0.9754);">Peak Excursion(dB):</div>
<div class="r" style="left:193px;top:566px;width:64px;height:17px;background:#fff;border:1px solid #f4f9fe;box-sizing:border-box;"></div>
<div class="t" style="left:196.00px;top:568px;font-size:11px;line-height:13px;color:#000;">0</div>
<div class="r" style="left:244px;top:567px;width:12px;height:15px;background:linear-gradient(#cfe2f5,#7fb6e8);"></div>
<svg class="r" style="left:247px;top:573px" width="6" height="4"><path d="M0 0H5.5L2.75 3z" fill="#000"/></svg>
<svg class="r" style="left:505px;top:567px" width="60" height="14"><path d="M1 4.5H5V1.5L9.5 6L5 10.5V7.5H1z" fill="#c8d4e0" stroke="#9aaabb" stroke-width="0.8"/><rect x="22.5" y="1.5" width="9" height="9" fill="url(#sq)" stroke="#2a48a8" stroke-width="0.8"/><rect x="44.5" y="1.5" width="9" height="9" fill="#3a7ae0" stroke="#2a58b8" stroke-width="0.8"/><path d="M47 6L49.5 3.5V5H52V9H51V6.5H49.5V8z" fill="#fff"/></svg>
<div class="r" style="left:3px;top:585px;width:490px;height:209px;background:#fff;"></div>
<div class="r" style="left:102px;top:585px;width:1px;height:23px;background:#e8e8e8;"></div>
<div class="r" style="left:202px;top:585px;width:1px;height:23px;background:#e8e8e8;"></div>
<div class="t" style="left:9.00px;top:592px;font-size:11px;line-height:13px;color:#000;font-family:'Liberation Mono', monospace;-webkit-text-stroke:0.15px currentColor;letter-spacing:-0.6px;">Peak Number</div>
<div class="t" style="left:108.00px;top:592px;font-size:11px;line-height:13px;color:#000;font-family:'Liberation Mono', monospace;-webkit-text-stroke:0.15px currentColor;letter-spacing:-0.6px;">X Value</div>
<div class="t" style="left:208.00px;top:592px;font-size:11px;line-height:13px;color:#000;font-family:'Liberation Mono', monospace;-webkit-text-stroke:0.15px currentColor;letter-spacing:-0.6px;">Y Value</div>
<div class="r" style="left:3px;top:624px;width:474px;height:1px;background:#f0f0f0;"></div>
<div class="r" style="left:102px;top:608px;width:1px;height:16px;background:#f0f0f0;"></div>
<div class="r" style="left:202px;top:608px;width:1px;height:16px;background:#f0f0f0;"></div>
<div class="t" style="left:9.00px;top:612px;font-size:11px;line-height:13px;color:#000;font-family:'Liberation Mono', monospace;-webkit-text-stroke:0.15px currentColor;letter-spacing:-0.6px;">Peak 0</div>
<div class="t" style="left:108.00px;top:612px;font-size:11px;line-height:13px;color:#000;font-family:'Liberation Mono', monospace;-webkit-text-stroke:0.15px currentColor;letter-spacing:-0.6px;">12017391</div>
<div class="t" style="left:208.00px;top:612px;font-size:11px;line-height:13px;color:#000;font-family:'Liberation Mono', monospace;-webkit-text-stroke:0.15px currentColor;letter-spacing:-0.6px;">-23.1139</div>
<div class="r" style="left:3px;top:640px;width:474px;height:1px;background:#f0f0f0;"></div>
<div class="r" style="left:102px;top:624px;width:1px;height:16px;background:#f0f0f0;"></div>
<div class="r" style="left:202px;top:624px;width:1px;height:16px;background:#f0f0f0;"></div>
<div class="t" style="left:9.00px;top:628px;font-size:11px;line-height:13px;color:#000;font-family:'Liberation Mono', monospace;-webkit-text-stroke:0.15px currentColor;letter-spacing:-0.6px;">Peak 1</div>
<div class="t" style="left:108.00px;top:628px;font-size:11px;line-height:13px;color:#000;font-family:'Liberation Mono', monospace;-webkit-text-stroke:0.15px currentColor;letter-spacing:-0.6px;">11978260</div>
<div class="t" style="left:208.00px;top:628px;font-size:11px;line-height:13px;color:#000;font-family:'Liberation Mono', monospace;-webkit-text-stroke:0.15px currentColor;letter-spacing:-0.6px;">-23.161</div>
<div class="r" style="left:3px;top:656px;width:474px;height:1px;background:#f0f0f0;"></div>
<div class="r" style="left:102px;top:640px;width:1px;height:16px;background:#f0f0f0;"></div>
<div class="r" style="left:202px;top:640px;width:1px;height:16px;background:#f0f0f0;"></div>
<div class="t" style="left:9.00px;top:644px;font-size:11px;line-height:13px;color:#000;font-family:'Liberation Mono', monospace;-webkit-text-stroke:0.15px currentColor;letter-spacing:-0.6px;">Peak 2</div>
<div class="t" style="left:108.00px;top:644px;font-size:11px;line-height:13px;color:#000;font-family:'Liberation Mono', monospace;-webkit-text-stroke:0.15px currentColor;letter-spacing:-0.6px;">11939130</div>
<div class="t" style="left:208.00px;top:644px;font-size:11px;line-height:13px;color:#000;font-family:'Liberation Mono', monospace;-webkit-text-stroke:0.15px currentColor;letter-spacing:-0.6px;">-23.5654</div>
<div class="r" style="left:3px;top:672px;width:474px;height:1px;background:#f0f0f0;"></div>
<div class="r" style="left:102px;top:656px;width:1px;height:16px;background:#f0f0f0;"></div>
<div class="r" style="left:202px;top:656px;width:1px;height:16px;background:#f0f0f0;"></div>
<div class="t" style="left:9.00px;top:660px;font-size:11px;line-height:13px;color:#000;font-family:'Liberation Mono', monospace;-webkit-text-stroke:0.15px currentColor;letter-spacing:-0.6px;">Peak 3</div>
<div class="t" style="left:108.00px;top:660px;font-size:11px;line-height:13px;color:#000;font-family:'Liberation Mono', monospace;-webkit-text-stroke:0.15px currentColor;letter-spacing:-0.6px;">12056521</div>
<div class="t" style="left:208.00px;top:660px;font-size:11px;line-height:13px;color:#000;font-family:'Liberation Mono', monospace;-webkit-text-stroke:0.15px currentColor;letter-spacing:-0.6px;">-23.581</div>
<div class="r" style="left:3px;top:688px;width:474px;height:1px;background:#f0f0f0;"></div>
<div class="r" style="left:102px;top:672px;width:1px;height:16px;background:#f0f0f0;"></div>
<div class="r" style="left:202px;top:672px;width:1px;height:16px;background:#f0f0f0;"></div>
<div class="t" style="left:9.00px;top:676px;font-size:11px;line-height:13px;color:#000;font-family:'Liberation Mono', monospace;-webkit-text-stroke:0.15px currentColor;letter-spacing:-0.6px;">Peak 4</div>
<div class="t" style="left:108.00px;top:676px;font-size:11px;line-height:13px;color:#000;font-family:'Liberation Mono', monospace;-webkit-text-stroke:0.15px currentColor;letter-spacing:-0.6px;">12095652</div>
<div class="t" style="left:208.00px;top:676px;font-size:11px;line-height:13px;color:#000;font-family:'Liberation Mono', monospace;-webkit-text-stroke:0.15px currentColor;letter-spacing:-0.6px;">-24.3615</div>
<div class="r" style="left:3px;top:704px;width:474px;height:1px;background:#f0f0f0;"></div>
<div class="r" style="left:102px;top:688px;width:1px;height:16px;background:#f0f0f0;"></div>
<div class="r" style="left:202px;top:688px;width:1px;height:16px;background:#f0f0f0;"></div>
<div class="t" style="left:9.00px;top:692px;font-size:11px;line-height:13px;color:#000;font-family:'Liberation Mono', monospace;-webkit-text-stroke:0.15px currentColor;letter-spacing:-0.6px;">Peak 5</div>
<div class="t" style="left:108.00px;top:692px;font-size:11px;line-height:13px;color:#000;font-family:'Liberation Mono', monospace;-webkit-text-stroke:0.15px currentColor;letter-spacing:-0.6px;">11900000</div>
<div class="t" style="left:208.00px;top:692px;font-size:11px;line-height:13px;color:#000;font-family:'Liberation Mono', monospace;-webkit-text-stroke:0.15px currentColor;letter-spacing:-0.6px;">-24.3698</div>
<div class="r" style="left:3px;top:720px;width:474px;height:1px;background:#f0f0f0;"></div>
<div class="r" style="left:102px;top:704px;width:1px;height:16px;background:#f0f0f0;"></div>
<div class="r" style="left:202px;top:704px;width:1px;height:16px;background:#f0f0f0;"></div>
<div class="t" style="left:9.00px;top:708px;font-size:11px;line-height:13px;color:#000;font-family:'Liberation Mono', monospace;-webkit-text-stroke:0.15px currentColor;letter-spacing:-0.6px;">Peak 6</div>
<div class="t" style="left:108.00px;top:708px;font-size:11px;line-height:13px;color:#000;font-family:'Liberation Mono', monospace;-webkit-text-stroke:0.15px currentColor;letter-spacing:-0.6px;">11860869</div>
<div class="t" style="left:208.00px;top:708px;font-size:11px;line-height:13px;color:#000;font-family:'Liberation Mono', monospace;-webkit-text-stroke:0.15px currentColor;letter-spacing:-0.6px;">-25.6475</div>
<div class="r" style="left:3px;top:736px;width:474px;height:1px;background:#f0f0f0;"></div>
<div class="r" style="left:102px;top:720px;width:1px;height:16px;background:#f0f0f0;"></div>
<div class="r" style="left:202px;top:720px;width:1px;height:16px;background:#f0f0f0;"></div>
<div class="t" style="left:9.00px;top:724px;font-size:11px;line-height:13px;color:#000;font-family:'Liberation Mono', monospace;-webkit-text-stroke:0.15px currentColor;letter-spacing:-0.6px;">Peak 7</div>
<div class="t" style="left:108.00px;top:724px;font-size:11px;line-height:13px;color:#000;font-family:'Liberation Mono', monospace;-webkit-text-stroke:0.15px currentColor;letter-spacing:-0.6px;">12134782</div>
<div class="t" style="left:208.00px;top:724px;font-size:11px;line-height:13px;color:#000;font-family:'Liberation Mono', monospace;-webkit-text-stroke:0.15px currentColor;letter-spacing:-0.6px;">-25.6505</div>
<div class="r" style="left:3px;top:752px;width:474px;height:1px;background:#f0f0f0;"></div>
<div class="r" style="left:102px;top:736px;width:1px;height:16px;background:#f0f0f0;"></div>
<div class="r" style="left:202px;top:736px;width:1px;height:16px;background:#f0f0f0;"></div>
<div class="t" style="left:9.00px;top:740px;font-size:11px;line-height:13px;color:#000;font-family:'Liberation Mono', monospace;-webkit-text-stroke:0.15px currentColor;letter-spacing:-0.6px;">Peak 8</div>
<div class="t" style="left:108.00px;top:740px;font-size:11px;line-height:13px;color:#000;font-family:'Liberation Mono', monospace;-webkit-text-stroke:0.15px currentColor;letter-spacing:-0.6px;">18004347</div>
<div class="t" style="left:208.00px;top:740px;font-size:11px;line-height:13px;color:#000;font-family:'Liberation Mono', monospace;-webkit-text-stroke:0.15px currentColor;letter-spacing:-0.6px;">-26.3192</div>
<div class="r" style="left:3px;top:768px;width:474px;height:1px;background:#f0f0f0;"></div>
<div class="r" style="left:102px;top:752px;width:1px;height:16px;background:#f0f0f0;"></div>
<div class="r" style="left:202px;top:752px;width:1px;height:16px;background:#f0f0f0;"></div>
<div class="t" style="left:9.00px;top:756px;font-size:11px;line-height:13px;color:#000;font-family:'Liberation Mono', monospace;-webkit-text-stroke:0.15px currentColor;letter-spacing:-0.6px;">Peak 9</div>
<div class="t" style="left:108.00px;top:756px;font-size:11px;line-height:13px;color:#000;font-family:'Liberation Mono', monospace;-webkit-text-stroke:0.15px currentColor;letter-spacing:-0.6px;">17965217</div>
<div class="t" style="left:208.00px;top:756px;font-size:11px;line-height:13px;color:#000;font-family:'Liberation Mono', monospace;-webkit-text-stroke:0.15px currentColor;letter-spacing:-0.6px;">-26.4312</div>
<div class="r" style="left:3px;top:784px;width:474px;height:1px;background:#f0f0f0;"></div>
<div class="r" style="left:102px;top:768px;width:1px;height:16px;background:#f0f0f0;"></div>
<div class="r" style="left:202px;top:768px;width:1px;height:16px;background:#f0f0f0;"></div>
<div class="t" style="left:9.00px;top:772px;font-size:11px;line-height:13px;color:#000;font-family:'Liberation Mono', monospace;-webkit-text-stroke:0.15px currentColor;letter-spacing:-0.6px;">Peak 10</div>
<div class="t" style="left:108.00px;top:772px;font-size:11px;line-height:13px;color:#000;font-family:'Liberation Mono', monospace;-webkit-text-stroke:0.15px currentColor;letter-spacing:-0.6px;">18043478</div>
<div class="t" style="left:208.00px;top:772px;font-size:11px;line-height:13px;color:#000;font-family:'Liberation Mono', monospace;-webkit-text-stroke:0.15px currentColor;letter-spacing:-0.6px;">-26.5778</div>
<div class="r" style="left:3px;top:800px;width:474px;height:1px;background:#f0f0f0;"></div>
<div class="r" style="left:102px;top:784px;width:1px;height:16px;background:#f0f0f0;"></div>
<div class="r" style="left:202px;top:784px;width:1px;height:16px;background:#f0f0f0;"></div>
<div class="t" style="left:9.00px;top:788px;font-size:11px;line-height:13px;color:#000;font-family:'Liberation Mono', monospace;-webkit-text-stroke:0.15px currentColor;letter-spacing:-0.6px;">Peak 11</div>
<div class="t" style="left:108.00px;top:788px;font-size:11px;line-height:13px;color:#000;font-family:'Liberation Mono', monospace;-webkit-text-stroke:0.15px currentColor;letter-spacing:-0.6px;">17926086</div>
<div class="t" style="left:208.00px;top:788px;font-size:11px;line-height:13px;color:#000;font-family:'Liberation Mono', monospace;-webkit-text-stroke:0.15px currentColor;letter-spacing:-0.6px;">-26.9931</div>
<div class="r" style="left:477px;top:585px;width:16px;height:209px;background:#f0f0f0;"></div>
<div class="r" style="left:478px;top:602px;width:14px;height:19px;background:#cdcdcd;"></div>
<svg class="r" style="left:481px;top:591px" width="9" height="7"><path d="M1 5.5L4.5 2L8 5.5" fill="none" stroke="#505050" stroke-width="2"/></svg>
<svg class="r" style="left:481px;top:781px" width="9" height="7"><path d="M1 1.5L4.5 5L8 1.5" fill="none" stroke="#505050" stroke-width="2"/></svg>
<div class="r" style="left:3px;top:794px;width:490px;height:16px;background:#f0f0f0;"></div>
<div class="r" style="left:20px;top:795px;width:415px;height:14px;background:#cdcdcd;"></div>
<svg class="r" style="left:8px;top:797px" width="6" height="9"><path d="M5 0.8L1.3 4.5L5 8.2" fill="none" stroke="#505050" stroke-width="1.9"/></svg>
<svg class="r" style="left:465px;top:797px" width="6" height="9"><path d="M1 0.8L4.7 4.5L1 8.2" fill="none" stroke="#505050" stroke-width="1.9"/></svg>
<div class="r" style="left:497px;top:585px;width:486px;height:209px;background:#fff;"></div>
<div class="r" style="left:596px;top:585px;width:1px;height:23px;background:#e8e8e8;"></div>
<div class="r" style="left:697px;top:585px;width:1px;height:23px;background:#e8e8e8;"></div>
<div class="t" style="left:503.00px;top:592px;font-size:11px;line-height:13px;color:#000;font-family:'Liberation Mono', monospace;-webkit-text-stroke:0.15px currentColor;letter-spacing:-0.6px;">Valley Number</div>
<div class="t" style="left:602.00px;top:592px;font-size:11px;line-height:13px;color:#000;font-family:'Liberation Mono', monospace;-webkit-text-stroke:0.15px currentColor;letter-spacing:-0.6px;">X Value</div>
<div class="t" style="left:703.00px;top:592px;font-size:11px;line-height:13px;color:#000;font-family:'Liberation Mono', monospace;-webkit-text-stroke:0.15px currentColor;letter-spacing:-0.6px;">Y Value</div>
<div class="r" style="left:497px;top:624px;width:470px;height:1px;background:#f0f0f0;"></div>
<div class="r" style="left:596px;top:608px;width:1px;height:16px;background:#f0f0f0;"></div>
<div class="r" style="left:697px;top:608px;width:1px;height:16px;background:#f0f0f0;"></div>
<div class="t" style="left:503.00px;top:612px;font-size:11px;line-height:13px;color:#000;font-family:'Liberation Mono', monospace;-webkit-text-stroke:0.15px currentColor;letter-spacing:-0.6px;">Valley 0</div>
<div class="t" style="left:602.00px;top:612px;font-size:11px;line-height:13px;color:#000;font-family:'Liberation Mono', monospace;-webkit-text-stroke:0.15px currentColor;letter-spacing:-0.6px;">28921739</div>
<div class="t" style="left:703.00px;top:612px;font-size:11px;line-height:13px;color:#000;font-family:'Liberation Mono', monospace;-webkit-text-stroke:0.15px currentColor;letter-spacing:-0.6px;">-72.6651</div>
<div class="r" style="left:497px;top:640px;width:470px;height:1px;background:#f0f0f0;"></div>
<div class="r" style="left:596px;top:624px;width:1px;height:16px;background:#f0f0f0;"></div>
<div class="r" style="left:697px;top:624px;width:1px;height:16px;background:#f0f0f0;"></div>
<div class="t" style="left:503.00px;top:628px;font-size:11px;line-height:13px;color:#000;font-family:'Liberation Mono', monospace;-webkit-text-stroke:0.15px currentColor;letter-spacing:-0.6px;">Valley 1</div>
<div class="t" style="left:602.00px;top:628px;font-size:11px;line-height:13px;color:#000;font-family:'Liberation Mono', monospace;-webkit-text-stroke:0.15px currentColor;letter-spacing:-0.6px;">20547826</div>
<div class="t" style="left:703.00px;top:628px;font-size:11px;line-height:13px;color:#000;font-family:'Liberation Mono', monospace;-webkit-text-stroke:0.15px currentColor;letter-spacing:-0.6px;">-72.3834</div>
<div class="r" style="left:497px;top:656px;width:470px;height:1px;background:#f0f0f0;"></div>
<div class="r" style="left:596px;top:640px;width:1px;height:16px;background:#f0f0f0;"></div>
<div class="r" style="left:697px;top:640px;width:1px;height:16px;background:#f0f0f0;"></div>
<div class="t" style="left:503.00px;top:644px;font-size:11px;line-height:13px;color:#000;font-family:'Liberation Mono', monospace;-webkit-text-stroke:0.15px currentColor;letter-spacing:-0.6px;">Valley 2</div>
<div class="t" style="left:602.00px;top:644px;font-size:11px;line-height:13px;color:#000;font-family:'Liberation Mono', monospace;-webkit-text-stroke:0.15px currentColor;letter-spacing:-0.6px;">16869565</div>
<div class="t" style="left:703.00px;top:644px;font-size:11px;line-height:13px;color:#000;font-family:'Liberation Mono', monospace;-webkit-text-stroke:0.15px currentColor;letter-spacing:-0.6px;">-72.2238</div>
<div class="r" style="left:497px;top:672px;width:470px;height:1px;background:#f0f0f0;"></div>
<div class="r" style="left:596px;top:656px;width:1px;height:16px;background:#f0f0f0;"></div>
<div class="r" style="left:697px;top:656px;width:1px;height:16px;background:#f0f0f0;"></div>
<div class="t" style="left:503.00px;top:660px;font-size:11px;line-height:13px;color:#000;font-family:'Liberation Mono', monospace;-webkit-text-stroke:0.15px currentColor;letter-spacing:-0.6px;">Valley 3</div>
<div class="t" style="left:602.00px;top:660px;font-size:11px;line-height:13px;color:#000;font-family:'Liberation Mono', monospace;-webkit-text-stroke:0.15px currentColor;letter-spacing:-0.6px;">19100000</div>
<div class="t" style="left:703.00px;top:660px;font-size:11px;line-height:13px;color:#000;font-family:'Liberation Mono', monospace;-webkit-text-stroke:0.15px currentColor;letter-spacing:-0.6px;">-72.022</div>
<div class="r" style="left:497px;top:688px;width:470px;height:1px;background:#f0f0f0;"></div>
<div class="r" style="left:596px;top:672px;width:1px;height:16px;background:#f0f0f0;"></div>
<div class="r" style="left:697px;top:672px;width:1px;height:16px;background:#f0f0f0;"></div>
<div class="t" style="left:503.00px;top:676px;font-size:11px;line-height:13px;color:#000;font-family:'Liberation Mono', monospace;-webkit-text-stroke:0.15px currentColor;letter-spacing:-0.6px;">Valley 4</div>
<div class="t" style="left:602.00px;top:676px;font-size:11px;line-height:13px;color:#000;font-family:'Liberation Mono', monospace;-webkit-text-stroke:0.15px currentColor;letter-spacing:-0.6px;">17026086</div>
<div class="t" style="left:703.00px;top:676px;font-size:11px;line-height:13px;color:#000;font-family:'Liberation Mono', monospace;-webkit-text-stroke:0.15px currentColor;letter-spacing:-0.6px;">-71.8092</div>
<div class="r" style="left:497px;top:704px;width:470px;height:1px;background:#f0f0f0;"></div>
<div class="r" style="left:596px;top:688px;width:1px;height:16px;background:#f0f0f0;"></div>
<div class="r" style="left:697px;top:688px;width:1px;height:16px;background:#f0f0f0;"></div>
<div class="t" style="left:503.00px;top:692px;font-size:11px;line-height:13px;color:#000;font-family:'Liberation Mono', monospace;-webkit-text-stroke:0.15px currentColor;letter-spacing:-0.6px;">Valley 5</div>
<div class="t" style="left:602.00px;top:692px;font-size:11px;line-height:13px;color:#000;font-family:'Liberation Mono', monospace;-webkit-text-stroke:0.15px currentColor;letter-spacing:-0.6px;">24891304</div>
<div class="t" style="left:703.00px;top:692px;font-size:11px;line-height:13px;color:#000;font-family:'Liberation Mono', monospace;-webkit-text-stroke:0.15px currentColor;letter-spacing:-0.6px;">-71.4245</div>
<div class="r" style="left:497px;top:720px;width:470px;height:1px;background:#f0f0f0;"></div>
<div class="r" style="left:596px;top:704px;width:1px;height:16px;background:#f0f0f0;"></div>
<div class="r" style="left:697px;top:704px;width:1px;height:16px;background:#f0f0f0;"></div>
<div class="t" style="left:503.00px;top:708px;font-size:11px;line-height:13px;color:#000;font-family:'Liberation Mono', monospace;-webkit-text-stroke:0.15px currentColor;letter-spacing:-0.6px;">Valley 6</div>
<div class="t" style="left:602.00px;top:708px;font-size:11px;line-height:13px;color:#000;font-family:'Liberation Mono', monospace;-webkit-text-stroke:0.15px currentColor;letter-spacing:-0.6px;">15108695</div>
<div class="t" style="left:703.00px;top:708px;font-size:11px;line-height:13px;color:#000;font-family:'Liberation Mono', monospace;-webkit-text-stroke:0.15px currentColor;letter-spacing:-0.6px;">-71.1224</div>
<div class="r" style="left:497px;top:736px;width:470px;height:1px;background:#f0f0f0;"></div>
<div class="r" style="left:596px;top:720px;width:1px;height:16px;background:#f0f0f0;"></div>
<div class="r" style="left:697px;top:720px;width:1px;height:16px;background:#f0f0f0;"></div>
<div class="t" style="left:503.00px;top:724px;font-size:11px;line-height:13px;color:#000;font-family:'Liberation Mono', monospace;-webkit-text-stroke:0.15px currentColor;letter-spacing:-0.6px;">Valley 7</div>
<div class="t" style="left:602.00px;top:724px;font-size:11px;line-height:13px;color:#000;font-family:'Liberation Mono', monospace;-webkit-text-stroke:0.15px currentColor;letter-spacing:-0.6px;">27043478</div>
<div class="t" style="left:703.00px;top:724px;font-size:11px;line-height:13px;color:#000;font-family:'Liberation Mono', monospace;-webkit-text-stroke:0.15px currentColor;letter-spacing:-0.6px;">-71.0383</div>
<div class="r" style="left:497px;top:752px;width:470px;height:1px;background:#f0f0f0;"></div>
<div class="r" style="left:596px;top:736px;width:1px;height:16px;background:#f0f0f0;"></div>
<div class="r" style="left:697px;top:736px;width:1px;height:16px;background:#f0f0f0;"></div>
<div class="t" style="left:503.00px;top:740px;font-size:11px;line-height:13px;color:#000;font-family:'Liberation Mono', monospace;-webkit-text-stroke:0.15px currentColor;letter-spacing:-0.6px;">Valley 8</div>
<div class="t" style="left:602.00px;top:740px;font-size:11px;line-height:13px;color:#000;font-family:'Liberation Mono', monospace;-webkit-text-stroke:0.15px currentColor;letter-spacing:-0.6px;">26534782</div>
<div class="t" style="left:703.00px;top:740px;font-size:11px;line-height:13px;color:#000;font-family:'Liberation Mono', monospace;-webkit-text-stroke:0.15px currentColor;letter-spacing:-0.6px;">-71.0305</div>
<div class="r" style="left:497px;top:768px;width:470px;height:1px;background:#f0f0f0;"></div>
<div class="r" style="left:596px;top:752px;width:1px;height:16px;background:#f0f0f0;"></div>
<div class="r" style="left:697px;top:752px;width:1px;height:16px;background:#f0f0f0;"></div>
<div class="t" style="left:503.00px;top:756px;font-size:11px;line-height:13px;color:#000;font-family:'Liberation Mono', monospace;-webkit-text-stroke:0.15px currentColor;letter-spacing:-0.6px;">Valley 9</div>
<div class="t" style="left:602.00px;top:756px;font-size:11px;line-height:13px;color:#000;font-family:'Liberation Mono', monospace;-webkit-text-stroke:0.15px currentColor;letter-spacing:-0.6px;">23169565</div>
<div class="t" style="left:703.00px;top:756px;font-size:11px;line-height:13px;color:#000;font-family:'Liberation Mono', monospace;-webkit-text-stroke:0.15px currentColor;letter-spacing:-0.6px;">-71.0027</div>
<div class="r" style="left:497px;top:784px;width:470px;height:1px;background:#f0f0f0;"></div>
<div class="r" style="left:596px;top:768px;width:1px;height:16px;background:#f0f0f0;"></div>
<div class="r" style="left:697px;top:768px;width:1px;height:16px;background:#f0f0f0;"></div>
<div class="t" style="left:503.00px;top:772px;font-size:11px;line-height:13px;color:#000;font-family:'Liberation Mono', monospace;-webkit-text-stroke:0.15px currentColor;letter-spacing:-0.6px;">Valley 10</div>
<div class="t" style="left:602.00px;top:772px;font-size:11px;line-height:13px;color:#000;font-family:'Liberation Mono', monospace;-webkit-text-stroke:0.15px currentColor;letter-spacing:-0.6px;">24617391</div>
<div class="t" style="left:703.00px;top:772px;font-size:11px;line-height:13px;color:#000;font-family:'Liberation Mono', monospace;-webkit-text-stroke:0.15px currentColor;letter-spacing:-0.6px;">-70.8895</div>
<div class="r" style="left:497px;top:800px;width:470px;height:1px;background:#f0f0f0;"></div>
<div class="r" style="left:596px;top:784px;width:1px;height:16px;background:#f0f0f0;"></div>
<div class="r" style="left:697px;top:784px;width:1px;height:16px;background:#f0f0f0;"></div>
<div class="t" style="left:503.00px;top:788px;font-size:11px;line-height:13px;color:#000;font-family:'Liberation Mono', monospace;-webkit-text-stroke:0.15px currentColor;letter-spacing:-0.6px;">Valley 11</div>
<div class="t" style="left:602.00px;top:788px;font-size:11px;line-height:13px;color:#000;font-family:'Liberation Mono', monospace;-webkit-text-stroke:0.15px currentColor;letter-spacing:-0.6px;">28804347</div>
<div class="t" style="left:703.00px;top:788px;font-size:11px;line-height:13px;color:#000;font-family:'Liberation Mono', monospace;-webkit-text-stroke:0.15px currentColor;letter-spacing:-0.6px;">-70.859</div>
<div class="r" style="left:967px;top:585px;width:16px;height:209px;background:#f0f0f0;"></div>
<div class="r" style="left:968px;top:602px;width:14px;height:24px;background:#cdcdcd;"></div>
<svg class="r" style="left:971px;top:591px" width="9" height="7"><path d="M1 5.5L4.5 2L8 5.5" fill="none" stroke="#505050" stroke-width="2"/></svg>
<svg class="r" style="left:971px;top:781px" width="9" height="7"><path d="M1 1.5L4.5 5L8 1.5" fill="none" stroke="#505050" stroke-width="2"/></svg>
<div class="r" style="left:497px;top:794px;width:486px;height:16px;background:#f0f0f0;"></div>
<div class="r" style="left:514px;top:795px;width:407px;height:14px;background:#cdcdcd;"></div>
<svg class="r" style="left:502px;top:797px" width="6" height="9"><path d="M5 0.8L1.3 4.5L5 8.2" fill="none" stroke="#505050" stroke-width="1.9"/></svg>
<svg class="r" style="left:955px;top:797px" width="6" height="9"><path d="M1 0.8L4.7 4.5L1 8.2" fill="none" stroke="#505050" stroke-width="1.9"/></svg>
<div class="r" style="left:3px;top:810px;width:1184px;height:22px;background:#f0f0f0;"></div>
<div class="r" style="left:3px;top:810px;width:1184px;height:1px;background:#e2e2e2;"></div>
<svg class="r" style="left:6px;top:814px" width="17" height="16"><circle cx="4.5" cy="11.5" r="3.6" fill="#fff" stroke="#555" stroke-width="1.2"/><circle cx="11.5" cy="4.5" r="3.6" fill="#fff" stroke="#555" stroke-width="1.2"/><path d="M7 9L9 7" stroke="#555" stroke-width="2"/></svg>
<div class="t" style="left:36.50px;top:815px;font-size:11.5px;line-height:14px;color:#2020c8;transform:scaleX(0.9887);">Connected</div>
<div class="t" style="left:1065.00px;top:815px;font-size:11.5px;line-height:14px;color:#000;transform:scaleX(0.9415);">27-05-2017  10:45</div>
<svg class="r" style="left:1175px;top:820px" width="10" height="10"><g fill="#a0a0a0"><rect x="6" y="0" width="2" height="2"/><rect x="3" y="3" width="2" height="2"/><rect x="6" y="3" width="2" height="2"/><rect x="0" y="6" width="2" height="2"/><rect x="3" y="6" width="2" height="2"/><rect x="6" y="6" width="2" height="2"/></g></svg>
</body></html>
